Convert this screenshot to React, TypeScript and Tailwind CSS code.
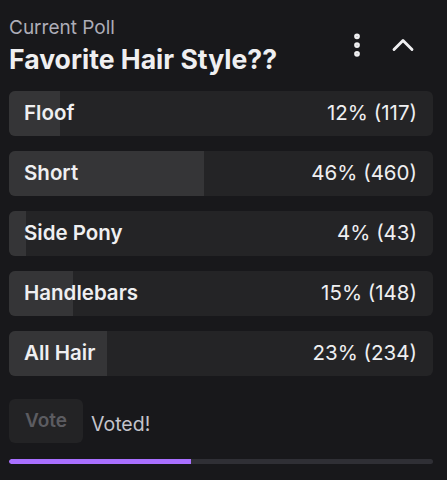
import { EllipsisVertical, ChevronUp } from 'lucide-react'

const options = [
  { label: 'Floof', pct: 12, votes: 117 },
  { label: 'Short', pct: 46, votes: 460 },
  { label: 'Side Pony', pct: 4, votes: 43 },
  { label: 'Handlebars', pct: 15, votes: 148 },
  { label: 'All Hair', pct: 23, votes: 234 },
]

export default function App() {
  return (
    <div
      className="w-[447px] h-[480px] bg-[#18181b] text-[#efeff1] pl-[9px] pr-[14px] pt-[16px]"
      style={{ fontFamily: 'Inter, "Noto Sans", sans-serif' }}
    >
      {/* Header */}
      <div className="flex items-start justify-between">
        <div>
          <div className="text-[19px] leading-[24px] text-[#adadb8]">Current Poll</div>
          <div className="text-[26.6px] leading-[30px] font-bold mt-[4px]">Favorite Hair Style??</div>
        </div>
        <div className="flex items-center gap-[13px] mt-[11px] mr-[12px]">
          <EllipsisVertical size={30} strokeWidth={2.6} className="text-[#efeff1]" />
          <ChevronUp size={36} strokeWidth={1.9} className="text-[#efeff1]" />
        </div>
      </div>

      {/* Options */}
      <div className="flex flex-col gap-[15px] mt-[17px]">
        {options.map((o) => (
          <div
            key={o.label}
            className="relative h-[45px] rounded-[6px] bg-[#242426] overflow-hidden flex items-center justify-between px-[15px]"
          >
            <div className="absolute left-0 top-0 bottom-0 bg-[#353537]" style={{ width: `${o.pct}%` }} />
            <span className="relative text-[20.5px] font-semibold">{o.label}</span>
            <span className="relative text-[20.5px] pr-[1px]">
              {o.pct}% ({o.votes})
            </span>
          </div>
        ))}
      </div>

      {/* Vote */}
      <div className="flex items-center gap-[8px] mt-[23px]">
        <div className="w-[74px] h-[44px] rounded-[6px] bg-[#232325] flex items-center justify-center text-[19px] font-semibold text-[#5c5c61]">
          Vote
        </div>
        <span className="text-[19.5px] text-[#c4c4cc] mt-[7px]">Voted!</span>
      </div>

      {/* Timer bar */}
      <div className="mt-[16px] h-[5px] rounded-full bg-[#2f2f35] overflow-hidden">
        <div className="h-full bg-[#a970ff] rounded-l-full" style={{ width: '43%' }} />
      </div>
    </div>
  )
}
